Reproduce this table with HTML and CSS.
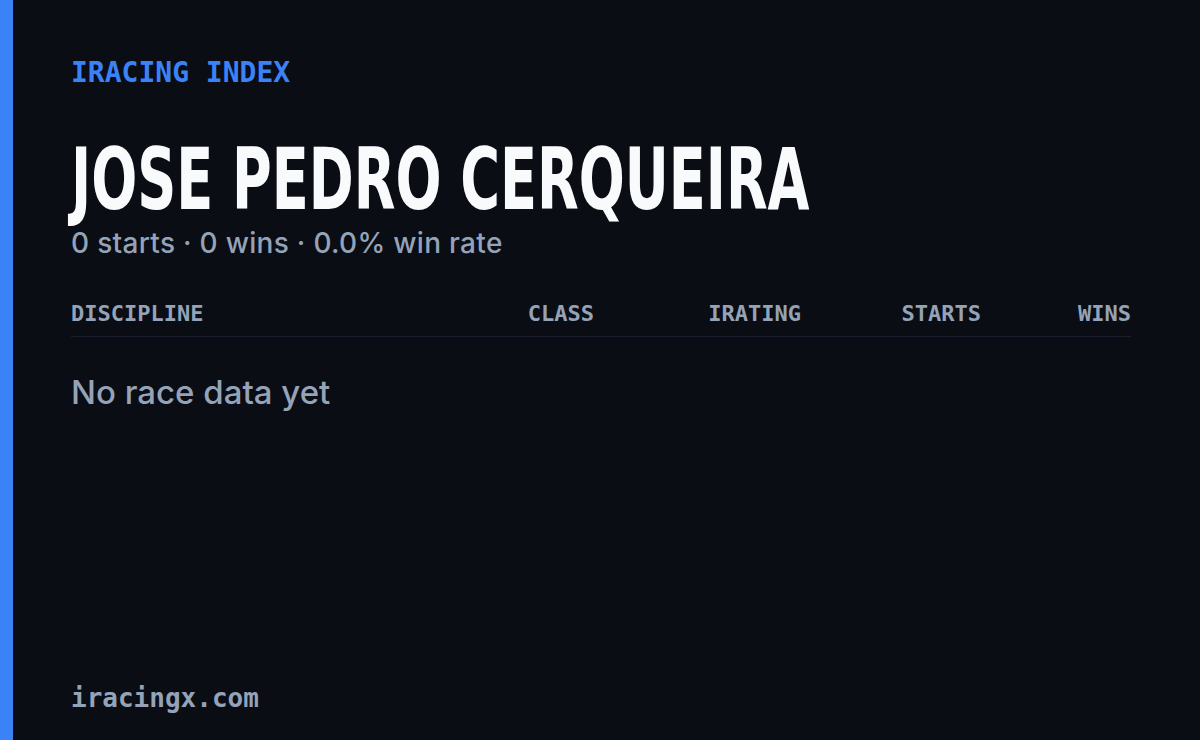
FILE: index.html
```html
<!DOCTYPE html>
<html lang="en">
<head>
    <meta charset="utf-8"/>
    <title>Jose Pedro Cerqueira - iRacing Index</title>
    <link rel="stylesheet" href="styles.css">
</head>
<body>
    <div class="card">
        <div class="card-body">
            <div class="eyebrow">IRACING INDEX</div>
            <h1 class="driver-name">JOSE PEDRO CERQUEIRA</h1>
            <p class="summary">0 starts · 0 wins · 0.0% win rate</p>

            <div class="stats">
                <div class="stats-head">
                    <span class="col-discipline">DISCIPLINE</span>
                    <span>CLASS</span>
                    <span>IRATING</span>
                    <span>STARTS</span>
                    <span>WINS</span>
                </div>
                <p class="stats-empty">No race data yet</p>
            </div>
        </div>
        <footer class="card-foot">iracingx.com</footer>
    </div>
</body>
</html>
```

FILE: styles.css
```css
html, body {
    margin: 0;
    height: 100%;
    background: #0a0d14;
}

.card {
    box-sizing: border-box;
    height: 740px;
    border-left: 13px solid #3b82f6;
    padding: 0 69px 0 58px;
    display: flex;
    flex-direction: column;
    overflow: hidden;
}

.card-body {
    flex: 1;
    padding-top: 59px;
}

.eyebrow {
    font-family: "DejaVu Sans Mono", monospace;
    font-weight: bold;
    font-size: 28px;
    line-height: 28px;
    color: #3b82f6;
}

.driver-name {
    margin: 54px 0 0;
    font-family: "DejaVu Sans Condensed", sans-serif;
    font-weight: bold;
    font-size: 86px;
    line-height: 76px;
    color: #f8fafc;
    white-space: nowrap;
    transform: scaleX(0.70);
    transform-origin: left center;
}

.summary {
    margin: 12px 0 0;
    font-family: "Inter", sans-serif;
    font-weight: 500;
    font-size: 28px;
    line-height: 28px;
    letter-spacing: 0.3px;
    color: #94a3b8;
}

.stats {
    margin-top: 46px;
}

.stats-head {
    display: grid;
    grid-template-columns: 1fr 120px 207px 180px 150px;
    padding-bottom: 11px;
    border-bottom: 1px solid #1a1f2e;
    font-family: "DejaVu Sans Mono", monospace;
    font-weight: bold;
    font-size: 22px;
    line-height: 22px;
    color: #94a3b8;
    text-align: right;
}

.stats-head .col-discipline {
    text-align: left;
}

.stats-empty {
    margin: 35px 0 0;
    font-family: "Inter", sans-serif;
    font-weight: 500;
    font-size: 33px;
    line-height: 40px;
    color: #94a3b8;
}

.card-foot {
    padding-bottom: 29px;
    font-family: "DejaVu Sans Mono", monospace;
    font-weight: bold;
    font-size: 26px;
    line-height: 26px;
    color: #94a3b8;
}
```
